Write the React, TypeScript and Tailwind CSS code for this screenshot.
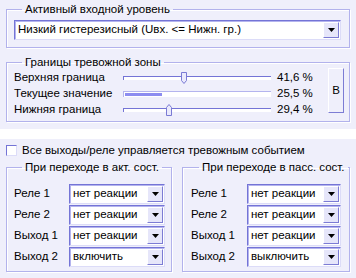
import React from "react";

const font = { fontFamily: '"Liberation Sans", Arial, sans-serif' };

function Arrow() {
  return (
    <div className="w-[16px] h-[16px] shrink-0 flex items-center justify-center bg-[#e6e6fa] border border-t-white border-l-white border-r-[#7c7cd4] border-b-[#7c7cd4]">
      <svg width="7" height="4" viewBox="0 0 7 4">
        <path d="M0 0h7L3.5 4z" fill="#000" />
      </svg>
    </div>
  );
}

function Combo({ value, className = "" }: { value: string; className?: string }) {
  return (
    <div
      className={`h-[20px] shrink-0 flex items-center bg-white border border-t-[#7474d6] border-l-[#7474d6] border-r-[#dcdcf8] border-b-[#dcdcf8] shadow-[inset_1px_1px_0_#b4b4ee] pl-[3px] pr-[1px] ${className}`}
    >
      <span className="flex-1 leading-none whitespace-nowrap overflow-hidden">{value}</span>
      <Arrow />
    </div>
  );
}

function Group({ title, className = "", children }: any) {
  return (
    <fieldset
      className={`border border-[#b2b2ec] shadow-[inset_1px_1px_0_#ffffff,1px_1px_0_#ffffff] ${className}`}
    >
      <legend className="ml-[8px] px-[3px] leading-[14px] whitespace-nowrap">{title}</legend>
      {children}
    </fieldset>
  );
}

function Slider({ pos, up }: { pos: number; up?: boolean }) {
  return (
    <div className="relative w-[148px] h-[12px] shrink-0 flex items-center">
      <div className="w-full h-[4px] bg-white border-t border-l border-[#7474d6] border-b-[#e8e8fc] border-r-[#e8e8fc]" />
      <svg
        className="absolute top-0"
        style={{ left: pos }}
        width="6"
        height="12"
        viewBox="0 0 6 12"
      >
        {up ? (
          <path d="M0.5 11.5V3.5L3 0.5L5.5 3.5V11.5Z" fill="#eaeafc" stroke="#7a7ad4" />
        ) : (
          <path d="M0.5 0.5H5.5V8.5L3 11.5L0.5 8.5Z" fill="#eaeafc" stroke="#7a7ad4" />
        )}
      </svg>
    </div>
  );
}

function Row({ label, value, left }: { label: string; value: string; left?: boolean }) {
  return (
    <div className="flex items-center">
      <span className={`shrink-0 ${left ? "w-[55px]" : "w-[56px]"}`}>{label}</span>
      <Combo value={value} className={left ? "w-[96px]" : "w-[94px]"} />
    </div>
  );
}

export default function App() {
  return (
    <div className="w-[356px] h-[278px] bg-white text-[11.5px] text-black overflow-hidden" style={font}>
      <div className="h-[129px] bg-[#efeffb] px-[6px] pt-[2px] flex flex-col">
        <Group title="Активный входной уровень" className="px-[7px] pt-[4px] h-[46px]">
          <Combo value="Низкий гистерезисный (Uвх. <= Нижн. гр.)" className="w-[327px]" />
        </Group>
        <Group title="Границы тревожной зоны" className="mt-[7px] h-[67px] pl-[7px] pr-[5px]">
          <div className="flex items-start">
            <div className="flex flex-col gap-[4px] pt-[3px]">
              <div className="flex items-center h-[12px]">
                <span className="w-[109px] shrink-0">Верхняя граница</span>
                <Slider pos={58} />
                <span className="ml-[6px]">41,6 %</span>
              </div>
              <div className="flex items-center h-[12px]">
                <span className="w-[109px] shrink-0">Текущее значение</span>
                <div className="w-[148px] h-[6px] shrink-0 bg-white border-t border-l border-[#b4b4ee] p-[1px]">
                  <div className="h-full bg-[#8c8cf0]" style={{ width: "25.5%" }} />
                </div>
                <span className="ml-[6px]">25,5 %</span>
              </div>
              <div className="flex items-center h-[12px]">
                <span className="w-[109px] shrink-0">Нижняя граница</span>
                <Slider pos={43} up />
                <span className="ml-[6px]">29,4 %</span>
              </div>
            </div>
            <div className="ml-auto mt-[-1px] w-[16px] h-[45px] flex items-center justify-center bg-[#efeffb] border border-t-white border-l-white border-r-[#7c7cd4] border-b-[#7c7cd4]">
              В
            </div>
          </div>
        </Group>
      </div>
      <div className="h-[10px]" />
      <div className="h-[139px] bg-[#efeffb] px-[6px] pt-[6px]">
        <div className="flex items-center gap-[5px] h-[11px]">
          <div className="w-[11px] h-[11px] bg-white border border-t-[#7474d6] border-l-[#7474d6] border-r-[#dcdcf8] border-b-[#dcdcf8]" />
          <span>Все выходы/реле управляется тревожным событием</span>
        </div>
        <div className="flex mt-[4px] gap-[10px]">
          <Group title="При переходе в акт. сост." className="w-[166px] h-[112px] pl-[7px] pt-[10px]">
            <div className="flex flex-col gap-[1px]">
              <Row label="Реле 1" value="нет реакции" left />
              <Row label="Реле 2" value="нет реакции" left />
              <Row label="Выход 1" value="нет реакции" left />
              <Row label="Выход 2" value="включить" left />
            </div>
          </Group>
          <Group title="При переходе в пасс. сост." className="w-[168px] h-[112px] pl-[8px] pt-[10px]">
            <div className="flex flex-col gap-[1px]">
              <Row label="Реле 1" value="нет реакции" />
              <Row label="Реле 2" value="нет реакции" />
              <Row label="Выход 1" value="нет реакции" />
              <Row label="Выход 2" value="выключить" />
            </div>
          </Group>
        </div>
      </div>
    </div>
  );
}
